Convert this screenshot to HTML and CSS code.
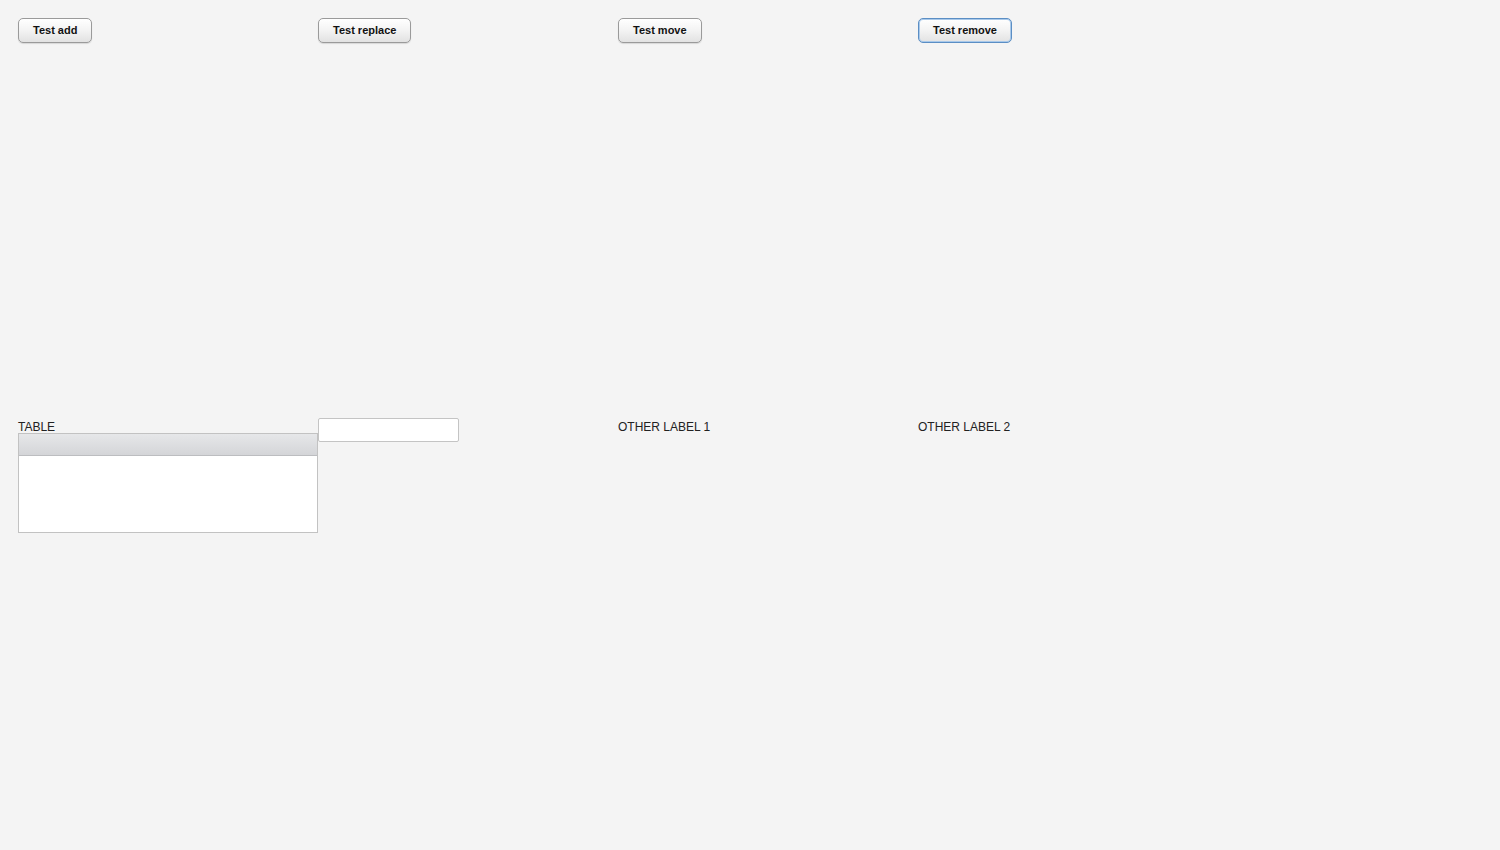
FILE: index.html
```html
<!DOCTYPE html>
<html lang="en">
<head>
    <meta charset="UTF-8">
    <title>Layout test</title>
    <link rel="stylesheet" href="styles.css">
</head>
<body>
    <div class="layout">
        <div class="cell"><button class="btn">Test add</button></div>
        <div class="cell"><button class="btn">Test replace</button></div>
        <div class="cell"><button class="btn">Test move</button></div>
        <div class="cell"><button class="btn focused">Test remove</button></div>

        <div class="cell">
            <div class="table-label">TABLE</div>
            <div class="table">
                <div class="table-header"></div>
                <div class="table-body"></div>
            </div>
        </div>
        <div class="cell"><input class="field" type="text"></div>
        <div class="cell"><div class="label">OTHER LABEL 1</div></div>
        <div class="cell"><div class="label">OTHER LABEL 2</div></div>
    </div>
</body>
</html>
```

FILE: styles.css
```css
body, html {
    margin: 0;
    padding: 0;
    height: 100%;
    background-color: #f4f4f4;
    font-family: 'Liberation Sans', Arial, sans-serif;
    color: #222;
}
.layout {
    display: grid;
    grid-template-columns: repeat(4, 300px);
    grid-template-rows: 400px auto;
    padding: 18px;
}
.cell {
    display: flex;
    flex-direction: column;
    align-items: flex-start;
}
.btn {
    height: 25px;
    padding: 0 14px 2px;
    font-family: 'Liberation Sans', Arial, sans-serif;
    font-size: 11px;
    font-weight: bold;
    color: #111;
    border: 1px solid #9a9a9a;
    border-radius: 5px;
    background: linear-gradient(#ffffff, #f3f3f3 50%, #e2e2e2);
    box-shadow: 0 1px 1px rgba(0, 0, 0, 0.12);
}
.btn.focused {
    border-color: #5b8ec4;
    box-shadow: inset 0 0 0 1px #a9c9ea;
}
.table-label {
    font-size: 12px;
    line-height: 19px;
    height: 15px;
}
.table {
    width: 300px;
    box-sizing: border-box;
    border: 1px solid #c2c2c2;
    background-color: #fff;
}
.table-header {
    height: 21px;
    border-bottom: 1px solid #bcbdc0;
    background: linear-gradient(#e6e7e9, #d4d5d8);
}
.table-body {
    height: 76px;
}
.field {
    width: 141px;
    height: 24px;
    box-sizing: border-box;
    margin: 0;
    border: 1px solid #c4c4c4;
    border-radius: 2px;
    background-color: #fff;
    outline: none;
}
.label {
    font-size: 12px;
    line-height: 18px;
}
```
